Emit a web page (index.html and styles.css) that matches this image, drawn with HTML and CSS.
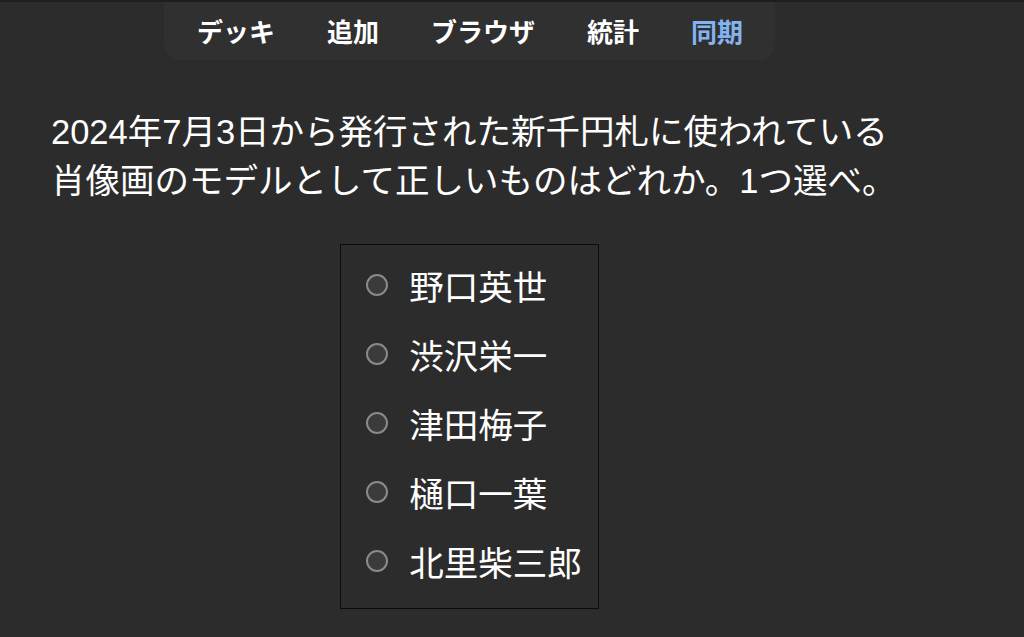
FILE: index.html
```html
<!DOCTYPE html>
<html lang="ja">
<head>
<meta charset="utf-8">
<link rel="stylesheet" href="styles.css">
</head>
<body>
<div class="page">
  <nav class="toolbar">
    <span class="nav-item">デッキ</span>
    <span class="nav-item">追加</span>
    <span class="nav-item">ブラウザ</span>
    <span class="nav-item">統計</span>
    <span class="nav-item active">同期</span>
  </nav>
  <div class="question">2024年7月3日から発行された新千円札に使われている<br>肖像画のモデルとして正しいものはどれか。1つ選べ。</div>
  <div class="options">
    <label class="option"><input type="radio" name="q" class="radio"><span>野口英世</span></label>
    <label class="option"><input type="radio" name="q" class="radio"><span>渋沢栄一</span></label>
    <label class="option"><input type="radio" name="q" class="radio"><span>津田梅子</span></label>
    <label class="option"><input type="radio" name="q" class="radio"><span>樋口一葉</span></label>
    <label class="option"><input type="radio" name="q" class="radio"><span>北里柴三郎</span></label>
  </div>
</div>
</body>
</html>
```

FILE: styles.css
```css
html, body {
  margin: 0;
  padding: 0;
  background: #2c2c2c;
  height: 100%;
}
body {
  border-top: 2px solid #1e1e1e;
  box-sizing: border-box;
  font-family: "Liberation Sans", "Noto Sans CJK JP", sans-serif;
  color: #ffffff;
  overflow: hidden;
}
.page {
  width: 939px;
  display: flex;
  flex-direction: column;
}
.toolbar {
  align-self: center;
  display: flex;
  gap: 52px;
  height: 58px;
  align-items: center;
  padding: 0 32px 0 33px;
  background: #303030;
  border-radius: 0 0 15px 15px;
  font-family: "Noto Sans CJK JP", sans-serif;
  font-weight: 700;
  font-size: 26px;
  line-height: 30px;
}
.nav-item {
  color: #ffffff;
}
.nav-item.active {
  color: #84b4f0;
}
.question {
  margin-top: 48px;
  padding-left: 51px;
  font-size: 34.5px;
  line-height: 49px;
}
.options {
  align-self: center;
  margin-top: 38px;
  border: 1px solid #0c0c0c;
  padding: 5px 16px 13px 25px;
  display: flex;
  flex-direction: column;
}
.option {
  display: flex;
  align-items: center;
  height: 69px;
  gap: 21px;
  font-size: 34.5px;
  font-family: "Noto Sans CJK JP", sans-serif;
}
.radio {
  appearance: none;
  -webkit-appearance: none;
  margin: 0;
  width: 22px;
  height: 22px;
  border-radius: 50%;
  border: 2px solid #8a8a8a;
  background: #3b3b3b;
  box-sizing: border-box;
  flex: none;
}
```
